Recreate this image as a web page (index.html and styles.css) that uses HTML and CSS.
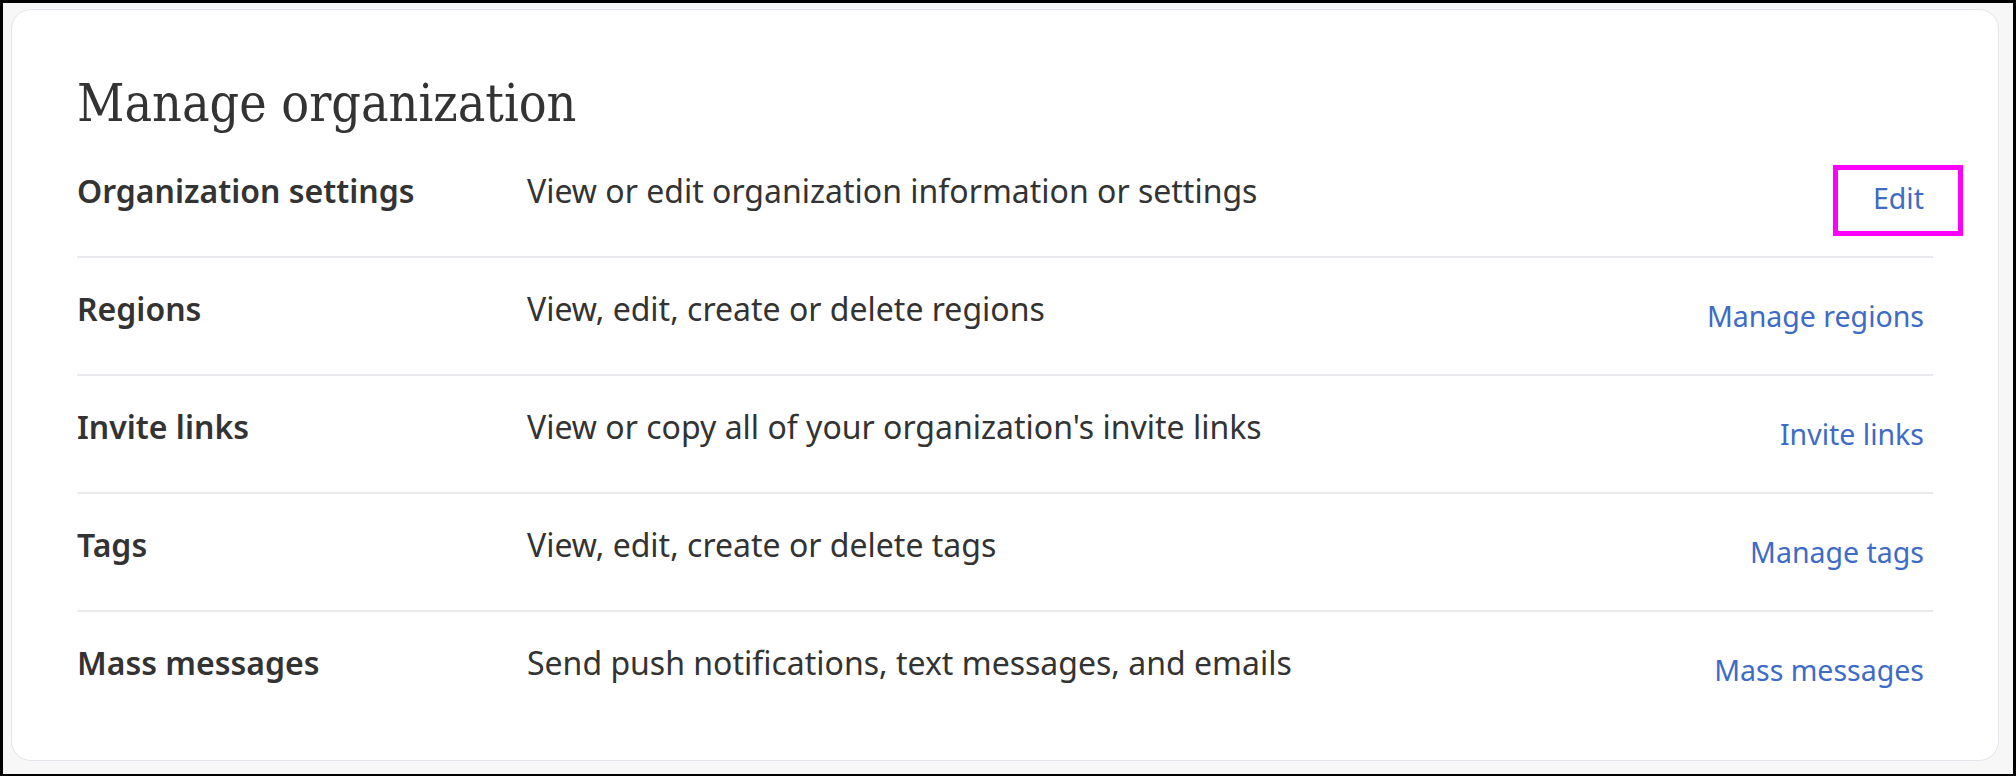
FILE: index.html
```html
<!DOCTYPE html>
<html lang="en">
<head>
  <meta charset="UTF-8">
  <title>Manage organization</title>
  <link rel="stylesheet" href="styles.css">
</head>
<body>
  <div class="frame">
    <section class="card">
      <h1>Manage organization</h1>

      <div class="row">
        <div class="label">Organization settings</div>
        <div class="desc">View or edit organization information or settings</div>
        <a class="link highlight" href="#">Edit</a>
      </div>
      <div class="row">
        <div class="label">Regions</div>
        <div class="desc">View, edit, create or delete regions</div>
        <a class="link" href="#">Manage regions</a>
      </div>
      <div class="row">
        <div class="label">Invite links</div>
        <div class="desc">View or copy all of your organization's invite links</div>
        <a class="link" href="#">Invite links</a>
      </div>
      <div class="row">
        <div class="label">Tags</div>
        <div class="desc">View, edit, create or delete tags</div>
        <a class="link" href="#">Manage tags</a>
      </div>
      <div class="row">
        <div class="label">Mass messages</div>
        <div class="desc">Send push notifications, text messages, and emails</div>
        <a class="link" href="#">Mass messages</a>
      </div>
    </section>
  </div>
</body>
</html>
```

FILE: styles.css
```css
body {
  margin: 0;
  background: #000;
  font-family: "Noto Sans", sans-serif;
  color: #333;
}
.frame {
  margin: 3px 3px 3px 3px;
  padding: 6px 14px 13px 8px;
  background: #f7f7f8;
}
.card {
  background: #fff;
  border: 1px solid #e4e4ea;
  border-radius: 20px;
  padding: 64px 65px 32px;
}
h1 {
  margin: 0 0 7px;
  font-family: "DejaVu Serif Condensed", "DejaVu Serif", serif;
  font-weight: normal;
  font-size: 51.5px;
  line-height: 59px;
  color: #333;
}
.row {
  display: grid;
  grid-template-columns: 450px 1fr auto;
  align-items: start;
  padding: 32px 0;
  border-bottom: 2px solid #e9e9ee;
  font-size: 32px;
  line-height: 38px;
}
.row:last-child {
  border-bottom: none;
}
.label {
  font-weight: 600;
}
.link {
  position: relative;
  padding: 6px 9px 6px 11px;
  font-size: 28.5px;
  line-height: 40px;
  color: #3d6bc6;
  text-decoration: none;
}
.highlight::after {
  content: "";
  position: absolute;
  top: -7px;
  bottom: -12px;
  left: -29px;
  right: -30px;
  border: 5px solid #ff00ff;
}
```
